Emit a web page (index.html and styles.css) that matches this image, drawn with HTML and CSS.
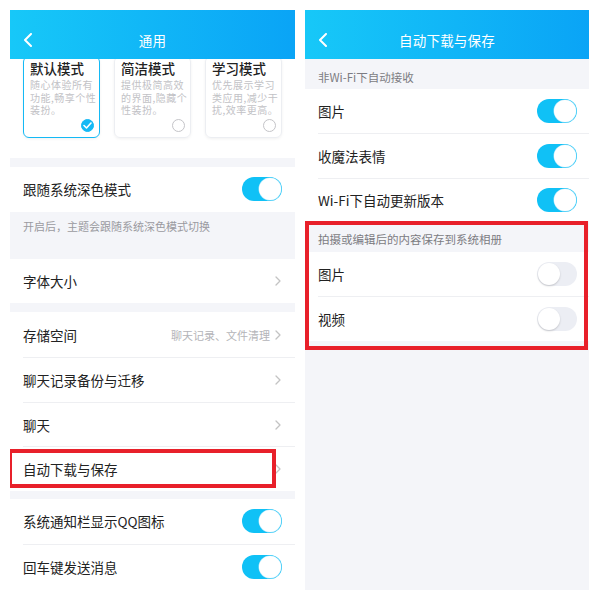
FILE: index.html
```html
<!DOCTYPE html>
<html lang="zh-CN">
<head>
<meta charset="utf-8">
<title>通用 / 自动下载与保存</title>
<link rel="stylesheet" href="styles.css">
</head>
<body>
<div class="screen">
  <section class="panel left">
    <div class="status"></div>
    <header class="header">
      <svg class="back" width="10" height="14" viewBox="0 0 10 14"><path d="M8 1 L2 7 L8 13" fill="none" stroke="#fff" stroke-width="2" stroke-linecap="round" stroke-linejoin="round"/></svg>
      <span class="title">通用</span>
      <span></span>
    </header>
    <div class="modes">
      <div class="mode selected">
        <div class="mode-title">默认模式</div>
        <div class="mode-desc"><p>随心体验所有</p><p>功能,畅享个性</p><p>装扮。</p></div>
        <div class="radio-line"><span class="radio checked"><svg width="9" height="7" viewBox="0 0 9 7"><path d="M1 3.5 L3.5 6 L8 1" fill="none" stroke="#fff" stroke-width="1.6" stroke-linecap="round" stroke-linejoin="round"/></svg></span></div>
      </div>
      <div class="mode">
        <div class="mode-title">简洁模式</div>
        <div class="mode-desc"><p>提供极简高效</p><p>的界面,隐藏个</p><p>性装扮。</p></div>
        <div class="radio-line"><span class="radio"></span></div>
      </div>
      <div class="mode">
        <div class="mode-title">学习模式</div>
        <div class="mode-desc"><p>优先展示学习</p><p>类应用,减少干</p><p>扰,效率更高。</p></div>
        <div class="radio-line"><span class="radio"></span></div>
      </div>
    </div>
    <div class="band"></div>
    <div class="row"><div class="row-inner"><span class="label">跟随系统深色模式</span><span class="switch on"><span class="knob"></span></span></div></div>
    <div class="note">开启后，主题会跟随系统深色模式切换</div>
    <div class="row"><div class="row-inner"><span class="label">字体大小</span><span class="chev"><svg width="6" height="10" viewBox="0 0 6 10"><path d="M1 1 L5 5 L1 9" fill="none" stroke="#c3c3c3" stroke-width="1.3" stroke-linecap="round" stroke-linejoin="round"/></svg></span></div></div>
    <div class="band"></div>
    <div class="group">
      <div class="row"><div class="row-inner"><span class="label">存储空间</span><span class="extra">聊天记录、文件清理<svg width="6" height="10" viewBox="0 0 6 10"><path d="M1 1 L5 5 L1 9" fill="none" stroke="#c3c3c3" stroke-width="1.3" stroke-linecap="round" stroke-linejoin="round"/></svg></span></div></div>
      <div class="row"><div class="row-inner"><span class="label">聊天记录备份与迁移</span><span class="chev"><svg width="6" height="10" viewBox="0 0 6 10"><path d="M1 1 L5 5 L1 9" fill="none" stroke="#c3c3c3" stroke-width="1.3" stroke-linecap="round" stroke-linejoin="round"/></svg></span></div></div>
      <div class="row"><div class="row-inner"><span class="label">聊天</span><span class="chev"><svg width="6" height="10" viewBox="0 0 6 10"><path d="M1 1 L5 5 L1 9" fill="none" stroke="#c3c3c3" stroke-width="1.3" stroke-linecap="round" stroke-linejoin="round"/></svg></span></div></div>
      <div class="row"><div class="row-inner"><span class="label">自动下载与保存</span><span class="chev"><svg width="6" height="10" viewBox="0 0 6 10"><path d="M1 1 L5 5 L1 9" fill="none" stroke="#c3c3c3" stroke-width="1.3" stroke-linecap="round" stroke-linejoin="round"/></svg></span></div></div>
    </div>
    <div class="band short"></div>
    <div class="group">
      <div class="row"><div class="row-inner"><span class="label">系统通知栏显示QQ图标</span><span class="switch on"><span class="knob"></span></span></div></div>
      <div class="row"><div class="row-inner"><span class="label">回车键发送消息</span><span class="switch on"><span class="knob"></span></span></div></div>
    </div>
    <div class="highlight hl-left"></div>
  </section>

  <section class="panel right">
    <div class="status"></div>
    <header class="header">
      <svg class="back" width="10" height="14" viewBox="0 0 10 14"><path d="M8 1 L2 7 L8 13" fill="none" stroke="#fff" stroke-width="2" stroke-linecap="round" stroke-linejoin="round"/></svg>
      <span class="title">自动下载与保存</span>
      <span></span>
    </header>
    <div class="sec-head">非Wi-Fi下自动接收</div>
    <div class="group">
      <div class="row r"><div class="row-inner"><span class="label">图片</span><span class="switch on"><span class="knob"></span></span></div></div>
      <div class="row r"><div class="row-inner"><span class="label">收魔法表情</span><span class="switch on"><span class="knob"></span></span></div></div>
      <div class="row r short"><div class="row-inner"><span class="label">Wi-Fi下自动更新版本</span><span class="switch on"><span class="knob"></span></span></div></div>
    </div>
    <div class="sec-head tall">拍摄或编辑后的内容保存到系统相册</div>
    <div class="group">
      <div class="row r"><div class="row-inner"><span class="label">图片</span><span class="switch off"><span class="knob"></span></span></div></div>
      <div class="row r"><div class="row-inner"><span class="label">视频</span><span class="switch off"><span class="knob"></span></span></div></div>
    </div>
    <div class="filler"></div>
    <div class="highlight hl-right"></div>
  </section>
</div>
</body>
</html>
```

FILE: styles.css
```css
* { box-sizing: border-box; }
html, body { margin: 0; padding: 0; background: #fff; }
body {
  width: 600px;
  height: 600px;
  overflow: hidden;
  font-family: "Noto Sans CJK SC", "Noto Sans", sans-serif;
  color: #222;
}
.screen {
  display: flex;
  gap: 10px;
  padding-left: 10px;
  height: 590px;
}
.panel {
  position: relative;
  display: flex;
  flex-direction: column;
  background: #fff;
  overflow: hidden;
}
.panel.left { width: 285px; }
.panel.right { width: 284px; }
.status { height: 10px; flex: none; background: #fff; }
.header {
  flex: none;
  height: 49px;
  padding-top: 10px;
  display: grid;
  grid-template-columns: 40px 1fr 40px;
  align-items: center;
  background: linear-gradient(90deg, #17c8f8 0%, #0aa4f6 100%);
  color: #fff;
}
.back { margin-left: 13px; }
.title { text-align: center; font-size: 13.5px; letter-spacing: 0.2px; }

/* mode cards */
.modes {
  flex: none;
  height: 99px;
  display: flex;
  gap: 14px;
  padding: 0 0 0 13px;
  overflow: hidden;
}
.mode {
  width: 77px;
  height: 82px;
  margin-top: -3px;
  border: 1px solid #eceef2;
  border-radius: 6px;
  box-shadow: 0 1px 3px rgba(0,0,0,0.06);
  padding: 2px 0 0 6px;
  display: flex;
  flex-direction: column;
}
.mode.selected { border: 1.5px solid #14b9f5; }
.mode-title { font-size: 13.5px; line-height: 18px; color: #222; font-weight: 500; }
.mode-desc {
  margin-top: 2px;
  font-size: 10px;
  letter-spacing: 0.5px;
  color: #c2c2c6;
  white-space: nowrap;
}
.mode-desc p { margin: 0; height: 12.7px; line-height: 12.7px; overflow: visible; }
.radio-line {
  margin-top: auto;
  display: flex;
  justify-content: flex-end;
  padding: 0 5px 5px 0;
}
.radio {
  width: 13px;
  height: 13px;
  border-radius: 50%;
  border: 1px solid #c4c4c8;
  display: flex;
  align-items: center;
  justify-content: center;
}
.radio.checked { background: #14b9f5; border-color: #14b9f5; }

/* bands */
.band { flex: none; height: 9px; background: #f4f5f9; }
.band.short { height: 8px; }
.note {
  flex: none;
  height: 47px;
  background: #f4f5f9;
  padding: 6px 13px 0;
  font-size: 11px;
  line-height: 16px;
  color: #9a9aa0;
}

/* rows */
.row { flex: none; padding-left: 13px; background: #fff; }
.row-inner {
  height: 44.7px;
  display: flex;
  align-items: center;
  justify-content: space-between;
  padding-right: 13px;
}
.row + .row .row-inner { border-top: 1px solid #eeeff2; }
.row.short .row-inner { height: 43px; }
.label { font-size: 13.5px; line-height: 18px; color: #222; white-space: nowrap; }
.chev { display: flex; align-items: center; padding-right: 1px; }
.extra {
  display: flex;
  align-items: center;
  gap: 5px;
  font-size: 11px;
  color: #b4b4b8;
  padding-right: 1px;
}

/* switches */
.switch {
  width: 40px;
  height: 24px;
  border-radius: 12px;
  display: flex;
  align-items: center;
  padding: 1px;
}
.switch .knob {
  width: 22px;
  height: 22px;
  border-radius: 50%;
  background: #fff;
}
.switch.on { background: #10c1f6; justify-content: flex-end; }
.switch.on .knob { box-shadow: 0 0 0 0.5px #9fe2fa; }
.switch.off { background: #eceef4; justify-content: flex-start; }
.switch.off .knob { box-shadow: 0 1px 2px rgba(0,0,0,0.18); }

/* right panel */
.sec-head {
  flex: none;
  height: 30px;
  background: #f4f5f9;
  padding: 10px 13px 0;
  font-size: 11.5px;
  line-height: 16px;
  color: #7c7c82;
}
.sec-head.tall { height: 31px; }
.row.r { padding-left: 13px; }
.row.r .row-inner { padding-right: 12px; height: 44.4px; }
.row.r.short .row-inner { height: 43px; }
.filler { flex: 1; background: #f4f5f9; }

/* red annotation boxes (overlay) */
.highlight {
  position: absolute;
  border: 4px solid #e8202a;
  pointer-events: none;
}
.hl-left { left: -2px; top: 449px; width: 268px; height: 39px; }
.hl-right { left: 0; top: 221px; width: 283px; height: 129px; }
```
